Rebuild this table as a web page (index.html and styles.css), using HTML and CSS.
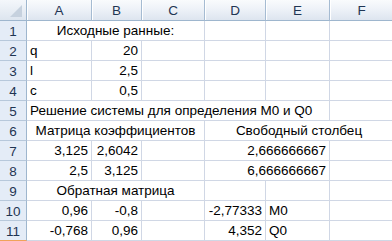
FILE: index.html
```html
<!DOCTYPE html>
<html>
<head>
<meta charset="utf-8">
<link rel="stylesheet" href="styles.css">
</head>
<body>
<div class="sheet">
  <div class="corner"><svg width="26" height="20" viewBox="0 0 26 20"><polygon points="22,5 22,17 10,17" fill="#c6d1de"/></svg></div>
  <div class="colh">A</div>
  <div class="colh">B</div>
  <div class="colh">C</div>
  <div class="colh">D</div>
  <div class="colh">E</div>
  <div class="colh">F</div>

  <div class="rowh">1</div>
  <div class="cell center span3">Исходные ранные:</div>
  <div class="cell"></div><div class="cell"></div><div class="cell"></div>

  <div class="rowh">2</div>
  <div class="cell">q</div><div class="cell right">20</div>
  <div class="cell"></div><div class="cell"></div><div class="cell"></div><div class="cell"></div>

  <div class="rowh">3</div>
  <div class="cell">l</div><div class="cell right">2,5</div>
  <div class="cell"></div><div class="cell"></div><div class="cell"></div><div class="cell"></div>

  <div class="rowh">4</div>
  <div class="cell">c</div><div class="cell right">0,5</div>
  <div class="cell"></div><div class="cell"></div><div class="cell"></div><div class="cell"></div>

  <div class="rowh">5</div>
  <div class="cell span5">Решение системы для определения M0 и Q0</div>
  <div class="cell"></div>

  <div class="rowh">6</div>
  <div class="cell center span3">Матрица коэффициентов</div>
  <div class="cell center span3">Свободный столбец</div>

  <div class="rowh">7</div>
  <div class="cell right">3,125</div><div class="cell right">2,6042</div>
  <div class="cell"></div>
  <div class="cell right span2">2,666666667</div>
  <div class="cell"></div>

  <div class="rowh">8</div>
  <div class="cell right">2,5</div><div class="cell right">3,125</div>
  <div class="cell"></div>
  <div class="cell right span2">6,666666667</div>
  <div class="cell"></div>

  <div class="rowh">9</div>
  <div class="cell center span3">Обратная матрица</div>
  <div class="cell"></div><div class="cell"></div><div class="cell"></div>

  <div class="rowh">10</div>
  <div class="cell right">0,96</div><div class="cell right">-0,8</div>
  <div class="cell"></div>
  <div class="cell right">-2,77333</div><div class="cell">M0</div>
  <div class="cell"></div>

  <div class="rowh last">11</div>
  <div class="cell right">-0,768</div><div class="cell right">0,96</div>
  <div class="cell"></div>
  <div class="cell right">4,352</div><div class="cell">Q0</div>
  <div class="cell"></div>
</div>
</body>
</html>
```

FILE: styles.css
```css
html, body {
  margin: 0;
  padding: 0;
  background: #ffffff;
  overflow: hidden;
}
.sheet {
  display: grid;
  grid-template-columns: 27px 65px 50px 63px 61px 64px 64px;
  grid-template-rows: 21px repeat(11, 20px);
  width: 394px;
  font-family: "Liberation Sans", Arial, sans-serif;
  font-size: 13.5px;
  color: #000;
}
.corner {
  box-sizing: border-box;
  background: linear-gradient(#f4f7fb, #dde5ef);
  border-right: 1px solid #9eb6ce;
  border-bottom: 1px solid #9eb6ce;
}
.corner svg { display: block; }
.colh {
  box-sizing: border-box;
  background: linear-gradient(#f9fbfd 0%, #eef2f8 45%, #dde5ef 100%);
  border-right: 1px solid #a5bbd2;
  border-bottom: 1px solid #9eb6ce;
  box-shadow: inset 1px 0 0 #ffffff;
  display: flex;
  align-items: center;
  justify-content: center;
  color: #1f3553;
  padding-top: 1px;
}
.rowh {
  box-sizing: border-box;
  background: #e4ecf7;
  border-right: 1px solid #9eb6ce;
  border-bottom: 1px solid #b7c8db;
  display: flex;
  align-items: flex-end;
  justify-content: center;
  padding-bottom: 1px;
  color: #1f3553;
}
.rowh.last {
  border-bottom-color: #f0a35a;
}
.cell {
  box-sizing: border-box;
  border-right: 1px solid #d0d7e5;
  border-bottom: 1px solid #d0d7e5;
  display: flex;
  align-items: flex-end;
  padding: 0 3px 1px 3px;
  white-space: nowrap;
  line-height: 17px;
}
.right { justify-content: flex-end; }
.center { justify-content: center; }
.span2 { grid-column: span 2; }
.span3 { grid-column: span 3; }
.span5 { grid-column: span 5; }
```
